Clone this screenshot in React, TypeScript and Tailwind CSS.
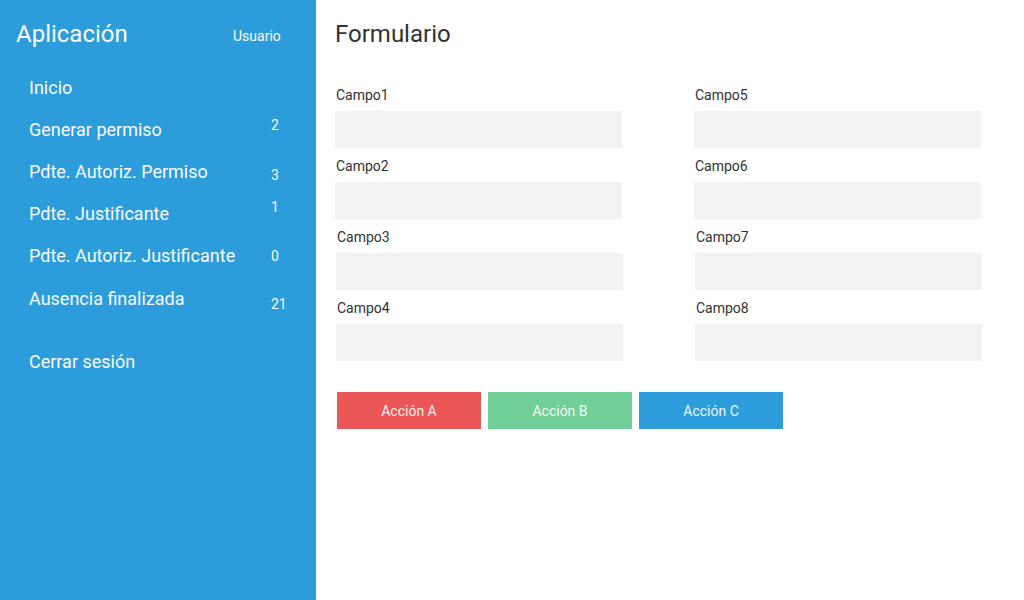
import React from "react";

const menu: { label: string; badge?: string; badgeClass?: string; rowClass?: string }[] = [
  { label: "Inicio" },
  { label: "Generar permiso", badge: "2", badgeClass: "-top-[5px]" },
  { label: "Pdte. Autoriz. Permiso", badge: "3", badgeClass: "top-[3px]" },
  { label: "Pdte. Justificante", badge: "1", badgeClass: "-top-[7px]" },
  { label: "Pdte. Autoriz. Justificante", badge: "0", badgeClass: "top-0" },
  { label: "Ausencia finalizada", badge: "21", badgeClass: "top-[5px]", rowClass: "pt-[2px]" },
];

const rows: [string, string][] = [
  ["Campo1", "Campo5"],
  ["Campo2", "Campo6"],
  ["Campo3", "Campo7"],
  ["Campo4", "Campo8"],
];

function Field({ label }: { label: string }) {
  return (
    <div className="flex w-[287px] flex-col">
      <label className="pl-px text-sm leading-5 text-[#333333]">{label}</label>
      <input
        type="text"
        className="mt-[6px] h-[37px] w-full bg-[#f2f2f2] outline-none"
      />
    </div>
  );
}

export default function App() {
  return (
    <div
      className="flex h-screen min-h-[600px] w-full bg-white"
      style={{ fontFamily: "Roboto, 'Noto Sans', sans-serif" }}
    >
      {/* sidebar */}
      <aside className="flex w-[316px] shrink-0 flex-col bg-[#2d9cdb] text-[#f7fbfe]">
        <header className="flex h-[67px] items-center pl-4">
          <h1 className="w-[217px] text-2xl leading-8">Aplicación</h1>
          <span className="mt-[4px] text-sm leading-5">Usuario</span>
        </header>
        <nav className="flex flex-col">
          {menu.map((m) => (
            <a
              key={m.label}
              href="#"
              className={`grid h-[42px] grid-cols-[242px_auto] items-center pl-[29px] text-lg leading-7 ${m.rowClass ?? ""}`}
            >
              <span>{m.label}</span>
              {m.badge && (
                <span className={`relative text-sm leading-5 ${m.badgeClass}`}>
                  {m.badge}
                </span>
              )}
            </a>
          ))}
          <a
            href="#"
            className="mt-[22px] flex h-[42px] items-center pl-[29px] text-lg leading-7"
          >
            Cerrar sesión
          </a>
        </nav>
      </aside>

      {/* main */}
      <main className="flex flex-1 flex-col pl-[19px] pt-[18px]">
        <h2 className="text-2xl leading-8 text-[#333333]">Formulario</h2>
        <form className="mt-[35px] flex flex-col gap-2">
          {rows.map(([a, b], i) => (
            <div
              key={a}
              className={`flex gap-[72px] ${i >= 2 ? "pl-px" : ""}`}
            >
              <Field label={a} />
              <Field label={b} />
            </div>
          ))}
          <div className="mt-[23px] flex gap-[7px] pl-[2px]">
            <button
              type="button"
              className="h-[37px] w-[144px] bg-[#eb5757] text-sm text-white/90"
            >
              Acción A
            </button>
            <button
              type="button"
              className="h-[37px] w-[144px] bg-[#6fcf97] text-sm text-white/90"
            >
              Acción B
            </button>
            <button
              type="button"
              className="h-[37px] w-[144px] bg-[#2d9cdb] text-sm text-white/90"
            >
              Acción C
            </button>
          </div>
        </form>
      </main>
    </div>
  );
}
